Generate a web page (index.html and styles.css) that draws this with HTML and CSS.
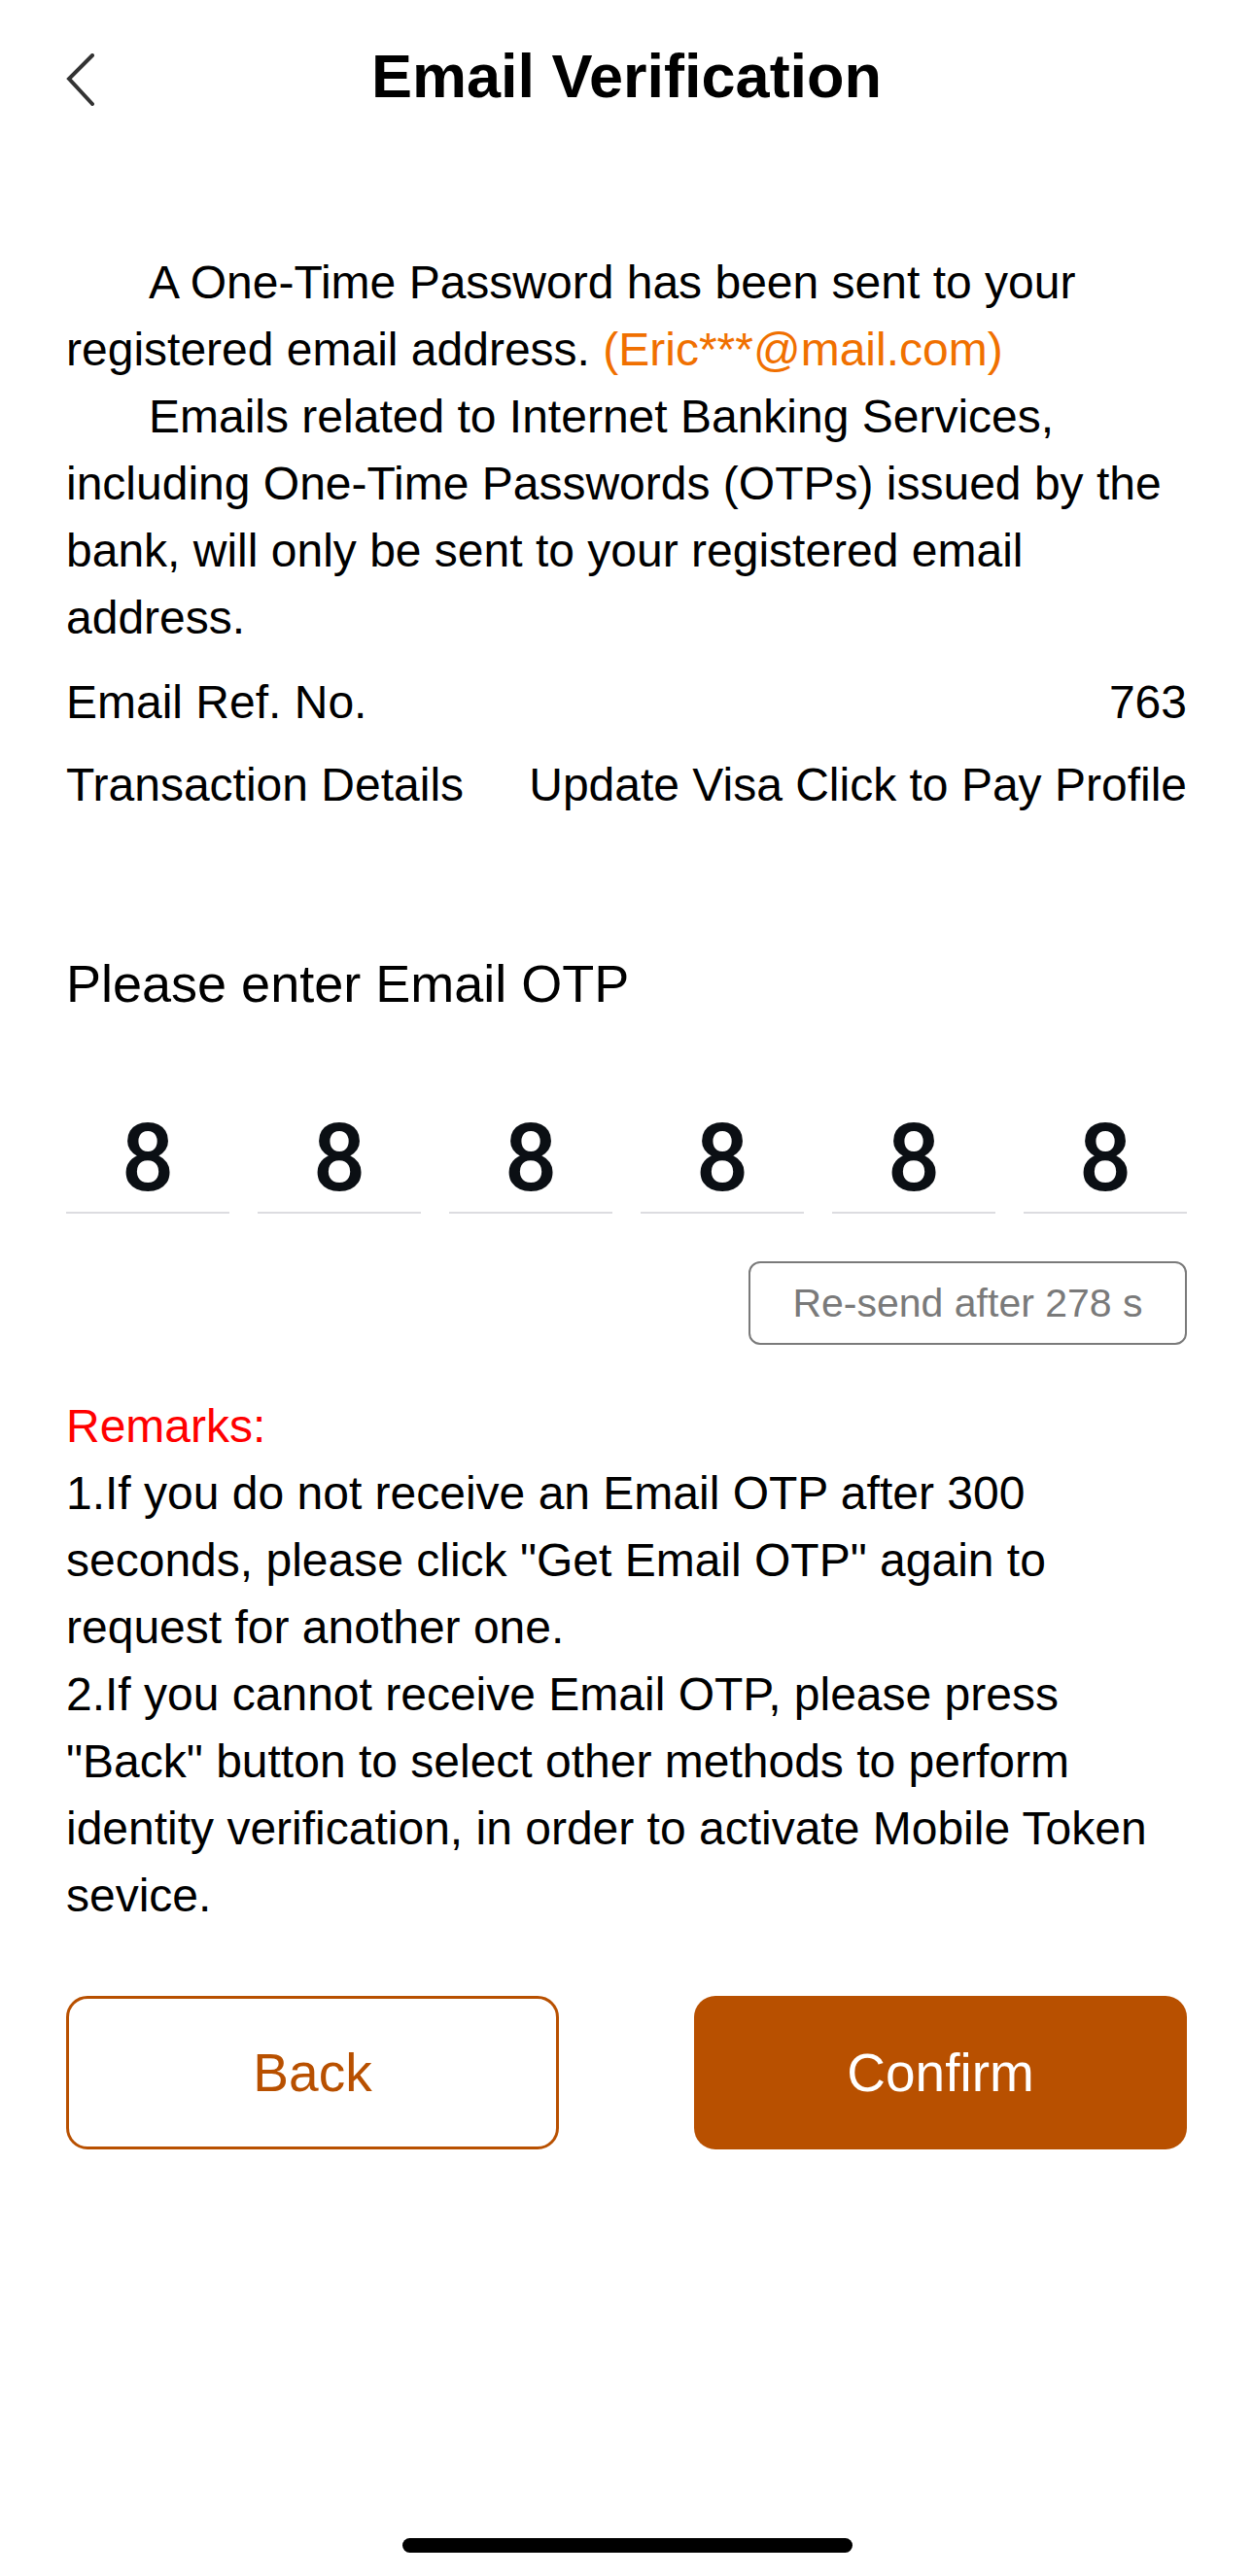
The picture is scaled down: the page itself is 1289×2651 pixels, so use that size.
FILE: index.html
```html
<!DOCTYPE html>
<html lang="en">
<head>
    <meta charset="UTF-8">
    <meta name="viewport" content="width=device-width, initial-scale=1.0">
    <title>Email Verification</title>
    <link rel="stylesheet" href="styles.css">
</head>
<body>

    <!-- Top bar -->
    <header class="top-bar">
        <button class="back-icon" type="button" aria-label="Back">
            <svg width="30" height="54" viewBox="0 0 30 54">
                <polyline points="27,2 3,26 27,52" fill="none" stroke="#333" stroke-width="4" stroke-linecap="round" stroke-linejoin="miter"/>
            </svg>
        </button>
        <h1>Email Verification</h1>
        <span></span>
    </header>

    <main class="content">
        <!-- Intro text -->
        <section class="intro">
            <p>A One-Time Password has been sent to your registered email address. <span class="email">(Eric***@mail.com)</span></p>
            <p>Emails related to Internet Banking Services, including One-Time Passwords (OTPs) issued by the bank, will only be sent to your registered email address.</p>
        </section>

        <!-- Reference details -->
        <section class="info">
            <div class="info-row">
                <span>Email Ref. No.</span>
                <span>763</span>
            </div>
            <div class="info-row">
                <span>Transaction Details</span>
                <span>Update Visa Click to Pay Profile</span>
            </div>
        </section>

        <!-- OTP entry -->
        <section class="otp">
            <h2>Please enter Email OTP</h2>
            <div class="otp-cells">
                <div class="otp-cell">8</div>
                <div class="otp-cell">8</div>
                <div class="otp-cell">8</div>
                <div class="otp-cell">8</div>
                <div class="otp-cell">8</div>
                <div class="otp-cell">8</div>
            </div>
            <button class="resend-btn" type="button" disabled>Re-send after 278 s</button>
        </section>

        <!-- Remarks -->
        <section class="remarks">
            <h3>Remarks:</h3>
            <p>1.If you do not receive an Email OTP after 300 seconds, please click "Get Email OTP" again to request for another one.</p>
            <p>2.If you cannot receive Email OTP, please press "Back" button to select other methods to perform identity verification, in order to activate Mobile Token sevice.</p>
        </section>

        <!-- Actions -->
        <div class="actions">
            <button class="btn btn-outline" type="button">Back</button>
            <button class="btn btn-solid" type="button">Confirm</button>
        </div>
    </main>

    <div class="home-indicator"></div>

</body>
</html>
```

FILE: styles.css
```css
/* General Styles */
body {
    font-family: 'Liberation Sans', Arial, sans-serif;
    margin: 0;
    padding: 0;
    background-color: #fff;
    color: #000;
}
button {
    font-family: inherit;
}

/* Top Bar */
.top-bar {
    display: grid;
    grid-template-columns: 1fr auto 1fr;
    align-items: center;
    height: 156px;
    padding: 0 68px;
}
.top-bar h1 {
    margin: 0;
    font-size: 63px;
    font-weight: bold;
    line-height: 156px;
}
.back-icon {
    justify-self: start;
    margin-top: 8px;
    padding: 0;
    border: none;
    background: none;
    display: flex;
}

/* Content */
.content {
    padding: 0 68px;
    font-size: 48px;
    line-height: 69px;
}
.intro {
    margin-top: 100px;
}
.intro p {
    margin: 0;
    text-indent: 85px;
}
.email {
    color: #f07000;
}

.info {
    margin-top: 10px;
}
.info-row {
    display: flex;
    justify-content: space-between;
    line-height: 85px;
}

/* OTP */
.otp h2 {
    margin: 128px 0 0;
    font-size: 54px;
    font-weight: normal;
    line-height: 69px;
}
.otp-cells {
    display: grid;
    grid-template-columns: repeat(6, 1fr);
    gap: 29px;
    margin-top: 90px;
}
.otp-cell {
    text-align: center;
    font-family: Roboto, 'Liberation Sans', sans-serif;
    font-weight: 500;
    font-size: 96px;
    line-height: 110px;
    color: #0b0f14;
    border-bottom: 2px solid #dcdce0;
}
.resend-btn {
    display: block;
    margin: 49px 0 0 auto;
    width: 451px;
    height: 86px;
    border: 2px solid #7a7a7a;
    border-radius: 12px;
    background: #fff;
    color: #7a7a7a;
    font-size: 41px;
}

/* Remarks */
.remarks {
    margin-top: 49px;
}
.remarks h3 {
    margin: 0;
    font-size: 48px;
    font-weight: normal;
    color: #ff0000;
}
.remarks p {
    margin: 0;
}

/* Buttons */
.actions {
    display: flex;
    justify-content: space-between;
    margin-top: 69px;
}
.btn {
    width: 507px;
    height: 158px;
    border-radius: 22px;
    font-size: 55px;
    cursor: pointer;
}
.btn-outline {
    background: #fff;
    color: #b85000;
    border: 3px solid #b85000;
}
.btn-solid {
    background: #b85000;
    color: #fff;
    border: none;
}

.home-indicator {
    position: fixed;
    bottom: 24px;
    left: 50%;
    width: 463px;
    height: 15px;
    margin-left: -231px;
    border-radius: 8px;
    background: #000;
}
```
